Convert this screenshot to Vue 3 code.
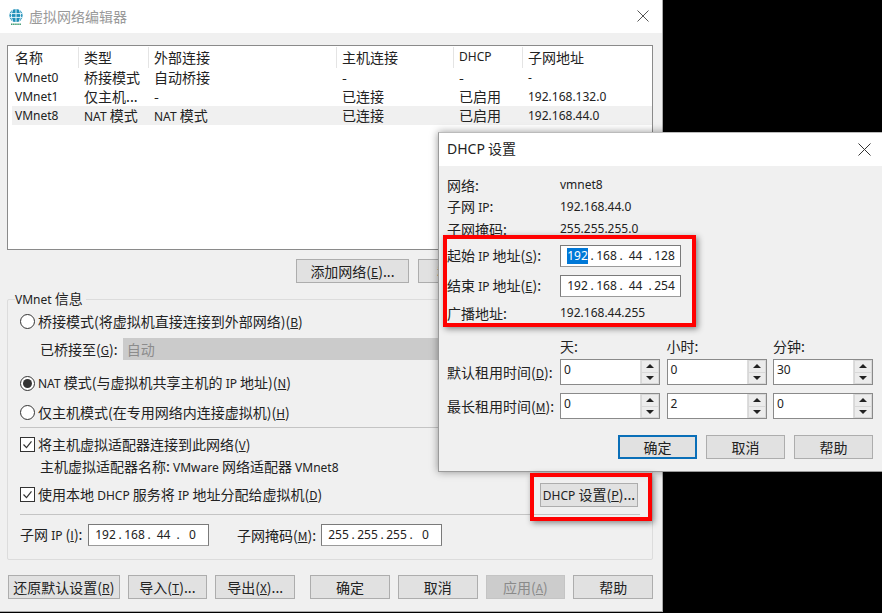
<script setup>
const rows = [
  { name: "VMnet0", type: "桥接模式", ext: "自动桥接", host: "-", dhcp: "-", subnet: "-" },
  { name: "VMnet1", type: "仅主机...", ext: "-", host: "已连接", dhcp: "已启用", subnet: "192.168.132.0" },
  { name: "VMnet8", type: "NAT 模式", ext: "NAT 模式", host: "已连接", dhcp: "已启用", subnet: "192.168.44.0", selected: true },
];

const leaseRows = [
  { label: "默认租用时间", key: "D", values: ["0", "0", "30"] },
  { label: "最长租用时间", key: "M", values: ["0", "2", "0"] },
];
</script>

<template>
  <div class="screen">
    <div class="win">
      <div class="titlebar">
        <svg class="app-icon" width="18" height="18" viewBox="0 0 18 18">
          <circle cx="9" cy="7.5" r="6.6" fill="#1f8fb8" />
          <path d="M2.6 5.6h12.8M2.6 9.4h12.8M9 1v13M5.6 2.2c-1.6 3-1.6 7.6 0 10.6M12.4 2.2c1.6 3 1.6 7.6 0 10.6" fill="none" stroke="#e4f5fb" stroke-width="1" />
          <path d="M4 16.2h10" stroke="#3d9a6e" stroke-width="1.6" stroke-dasharray="1.5 .6" />
        </svg>
        <span class="title-text">虚拟网络编辑器</span>
        <svg class="close main-close" width="12" height="12" viewBox="0 0 12 12">
          <path d="M.5.5l11 11M11.5.5l-11 11" stroke="#555" stroke-width="1" fill="none" />
        </svg>
      </div>

      <div class="content">
        <div class="list">
          <div class="tr th">
            <div class="first">名称</div>
            <div>类型</div>
            <div>外部连接</div>
            <div>主机连接</div>
            <div class="en">DHCP</div>
            <div>子网地址</div>
          </div>
          <div v-for="row in rows" :key="row.name" class="tr" :class="{ selected: row.selected }">
            <div class="first en">{{ row.name }}</div>
            <div v-if="row.type.startsWith('NAT')"><span class="en">NAT</span> 模式</div>
            <div v-else>{{ row.type }}</div>
            <div v-if="row.ext.startsWith('NAT')"><span class="en">NAT</span> 模式</div>
            <div v-else>{{ row.ext }}</div>
            <div>{{ row.host }}</div>
            <div>{{ row.dhcp }}</div>
            <div class="en">{{ row.subnet }}</div>
          </div>
        </div>

        <div class="list-actions">
          <button class="btn wide">添加网络(<u>E</u>)...</button>
          <button class="btn wide">移除网络(<u>O</u>)</button>
          <button class="btn wide">重命名网络(<u>W</u>)...</button>
        </div>

        <div class="group">
          <span class="legend"><span class="en">VMnet</span> 信息</span>

          <div class="opt r1"><i class="radio"></i><span>桥接模式(将虚拟机直接连接到外部网络)(<u>B</u>)</span></div>
          <div class="bridge">
            <span>已桥接至(<u>G</u>):</span>
            <div class="select-off">自动</div>
          </div>
          <div class="opt r2"><i class="radio on"></i><span><span class="en">NAT</span> 模式(与虚拟机共享主机的 <span class="en">IP</span> 地址)(<u>N</u>)</span></div>
          <div class="opt r3"><i class="radio"></i><span>仅主机模式(在专用网络内连接虚拟机)(<u>H</u>)</span></div>
          <div class="line l1"></div>
          <div class="opt c1">
            <i class="check"><svg width="13" height="13" viewBox="0 0 13 13"><path d="M2.5 6.5l3 3.2 5-6.4" fill="none" stroke="#333" stroke-width="1.2" /></svg></i>
            <span>将主机虚拟适配器连接到此网络(<u>V</u>)</span>
          </div>
          <div class="adapter">主机虚拟适配器名称: <span class="en">VMware</span> 网络适配器 <span class="en">VMnet8</span></div>
          <div class="opt c2">
            <i class="check"><svg width="13" height="13" viewBox="0 0 13 13"><path d="M2.5 6.5l3 3.2 5-6.4" fill="none" stroke="#333" stroke-width="1.2" /></svg></i>
            <span>使用本地 <span class="en">DHCP</span> 服务将 <span class="en">IP</span> 地址分配给虚拟机(<u>D</u>)</span>
            <button class="btn dhcp-btn"><span class="en">DHCP</span> 设置(<u>P</u>)...</button>
          </div>
          <div class="line l2"></div>
          <div class="subnet">
            <span class="subnet-label">子网 <span class="en">IP</span> (<u>I</u>):</span>
            <div class="ip">
              <span class="seg">192</span><span class="dot">.</span><span class="seg">168</span><span class="dot">.</span><span class="seg">44</span><span class="dot">.</span><span class="seg">0</span>
            </div>
            <span class="mask-label">子网掩码(<u>M</u>):</span>
            <div class="ip">
              <span class="seg">255</span><span class="dot">.</span><span class="seg">255</span><span class="dot">.</span><span class="seg">255</span><span class="dot">.</span><span class="seg">0</span>
            </div>
          </div>
        </div>

        <div class="footer">
          <button class="btn reset">还原默认设置(<u>R</u>)</button>
          <button class="btn">导入(<u>T</u>)...</button>
          <button class="btn">导出(<u>X</u>)...</button>
          <button class="btn ok">确定</button>
          <button class="btn">取消</button>
          <button class="btn disabled">应用(<u>A</u>)</button>
          <button class="btn">帮助</button>
        </div>
      </div>
    </div>

    <div class="dialog">
      <div class="dlg-title">
        <span class="dlg-name"><span class="dlg-en">DHCP</span> 设置</span>
        <svg class="close dlg-close" width="13" height="13" viewBox="0 0 13 13">
          <path d="M.5.5l12 12M12.5.5l-12 12" stroke="#333" stroke-width="1" fill="none" />
        </svg>
      </div>
      <div class="dlg-body">
        <div class="info first-info"><span class="lbl">网络:</span><span class="en">vmnet8</span></div>
        <div class="info"><span class="lbl">子网 <span class="en">IP</span>:</span><span class="en">192.168.44.0</span></div>
        <div class="info"><span class="lbl">子网掩码:</span><span class="en">255.255.255.0</span></div>
        <div class="info field start">
          <span class="lbl">起始 <span class="en">IP</span> 地址(<u>S</u>):</span>
          <div class="ip">
            <span class="seg sel">192</span><span class="dot">.</span><span class="seg">168</span><span class="dot">.</span><span class="seg">44</span><span class="dot">.</span><span class="seg">128</span>
          </div>
        </div>
        <div class="info field end">
          <span class="lbl">结束 <span class="en">IP</span> 地址(<u>E</u>):</span>
          <div class="ip">
            <span class="seg">192</span><span class="dot">.</span><span class="seg">168</span><span class="dot">.</span><span class="seg">44</span><span class="dot">.</span><span class="seg">254</span>
          </div>
        </div>
        <div class="info broadcast"><span class="lbl">广播地址:</span><span class="en">192.168.44.255</span></div>

        <div class="lease-head">
          <span>天:</span>
          <span>小时:</span>
          <span>分钟:</span>
        </div>
        <div v-for="lease in leaseRows" :key="lease.key" class="lease-row">
          <span class="lease-label">{{ lease.label }}(<u>{{ lease.key }}</u>):</span>
          <div v-for="(val, i) in lease.values" :key="i" class="spin">
            <span class="spin-val">{{ val }}</span>
            <div class="spin-btns">
              <b class="up"></b>
              <b class="down"></b>
            </div>
          </div>
        </div>
        <div class="dlg-footer">
          <button class="btn default">确定</button>
          <button class="btn">取消</button>
          <button class="btn">帮助</button>
        </div>
      </div>
    </div>

    <div class="redbox box-a"></div>
    <div class="redbox box-b"></div>
  </div>
</template>

<style>
html,
body {
  margin: 0;
  background: #000;
}
</style>

<style scoped>
.screen {
  position: relative;
  width: 882px;
  height: 613px;
  overflow: hidden;
  background: #000;
  font-family: "Noto Sans CJK SC", "Noto Sans", sans-serif;
  font-size: 14px;
  line-height: 18px;
  color: #222;
}

.en {
  font-family: "Noto Sans", "Noto Sans CJK SC", sans-serif;
  font-size: 12px;
}

u {
  font-size: 12px;
}

.win {
  width: 663px;
  height: 612px;
  box-sizing: border-box;
  background: #f0f0f0;
  border-right: 1px solid #aaa;
  border-bottom: 1px solid #aaa;
  display: flex;
  flex-direction: column;
}

.titlebar {
  height: 33px;
  background: #fff;
  display: flex;
  align-items: center;
  padding-left: 7px;
  flex-shrink: 0;
  position: relative;
}

.title-text {
  margin-left: 4px;
  margin-bottom: 2px;
  color: #999;
}

.main-close {
  position: absolute;
  left: 637px;
  top: 10px;
}

.content {
  padding: 12px 9px 0 7px;
}

.list {
  height: 205px;
  box-sizing: border-box;
  background: #fff;
  border: 1px solid #8a8a8a;
  padding-top: 1px;
}

.tr {
  display: grid;
  grid-template-columns: 70px 70px 188px 117px 69px 1fr;
  height: 19px;
  line-height: 19px;
  padding-left: 0;
}

.tr > div {
  padding-left: 6px;
  white-space: nowrap;
}

.tr > .first {
  padding-left: 7px;
}

.th {
  height: 21px;
  line-height: 20px;
}

.th > div + div {
  border-left: 1px solid #e4e4e4;
  padding-left: 5px;
}

.selected {
  background: #f0f0f0;
  margin-left: 4px;
  padding-left: 0;
  grid-template-columns: 66px 70px 188px 117px 69px 1fr;
}

.selected > .first {
  padding-left: 3px;
}

.list-actions {
  display: flex;
  gap: 9px;
  margin-top: 9px;
  padding-left: 289px;
}

.btn {
  width: 80px;
  height: 24px;
  padding: 0;
  box-sizing: border-box;
  background: #e1e1e1;
  border: 1px solid #adadad;
  font: inherit;
  color: #222;
  white-space: nowrap;
}

.btn.wide {
  width: 113px;
}

.group {
  position: relative;
  height: 261px;
  box-sizing: border-box;
  margin-top: 16px;
  padding-left: 12px;
  padding-right: 12px;
  border: 1px solid #dcdcdc;
  border-radius: 2px;
}

.legend {
  position: absolute;
  left: 7px;
  top: -11px;
  padding-right: 3px;
  background: #f0f0f0;
}

.opt {
  display: flex;
  align-items: center;
  height: 22px;
  white-space: nowrap;
}

.r1 {
  margin-top: 10px;
}

.r2 {
  margin-top: 12px;
}

.r3 {
  margin-top: 7px;
}

.c1 {
  margin-top: 5px;
}

.c2 {
  margin-top: 6px;
  height: 23px;
}

.radio {
  width: 15px;
  height: 15px;
  box-sizing: border-box;
  border: 1px solid #333;
  border-radius: 50%;
  background: #fff;
  margin-right: 3px;
  flex-shrink: 0;
  display: block;
  position: relative;
}

.radio.on::after {
  content: "";
  position: absolute;
  inset: 2px;
  border-radius: 50%;
  background: #333;
}

.check {
  width: 15px;
  height: 15px;
  box-sizing: border-box;
  border: 1px solid #333;
  background: #fff;
  margin-right: 3px;
  flex-shrink: 0;
  display: block;
}

.check svg {
  display: block;
  margin: 0;
}

.bridge {
  display: flex;
  align-items: center;
  height: 22px;
  margin-top: 6px;
  padding-left: 20px;
}

.select-off {
  margin-left: 5px;
  flex: 1;
  height: 22px;
  line-height: 22px;
  padding-left: 4px;
  background: #cbcbcb;
  color: #8c8c8c;
}

.line {
  height: 1px;
  background: #c4c4c4;
}

.l1 {
  margin-top: 4px;
}

.l2 {
  margin-top: 8px;
}

.adapter {
  height: 22px;
  line-height: 22px;
  padding-left: 20px;
  white-space: nowrap;
}

.dhcp-btn {
  width: 98px;
  height: 24px;
  margin-left: auto;
  margin-right: 2px;
}

.subnet {
  display: flex;
  align-items: center;
  margin-top: 9px;
  height: 22px;
  white-space: nowrap;
}

.subnet-label {
  width: 68px;
}

.mask-label {
  margin-left: 28px;
  width: 84px;
}

.ip {
  width: 121px;
  height: 22px;
  box-sizing: border-box;
  border: 1px solid #7a7a7a;
  border-bottom-color: #9a9a9a;
  background: #fff;
  display: flex;
  align-items: center;
  padding-left: 6px;
  font-family: "Noto Sans", sans-serif;
  font-size: 12px;
  flex-shrink: 0;
}

.seg {
  width: 21px;
  text-align: center;
}

.seg.sel {
  background: #0078d7;
  color: #fff;
  line-height: 16px;
}

.dot {
  width: 8px;
  text-align: center;
}

.footer {
  display: flex;
  margin-top: 15px;
  padding-left: 1px;
  gap: 8px;
}

.reset {
  width: 112px;
}

.ok {
  margin-left: 7px;
}

.disabled {
  background: #cccccc;
  border-color: #c4c4c4;
  color: #8a8a8a;
}

.dialog {
  position: absolute;
  left: 438px;
  top: 132px;
  width: 444px;
  height: 340px;
  box-sizing: border-box;
  background: #f0f0f0;
  border-left: 1px solid #9a9a9a;
  border-top: 1px solid #bbb;
  border-bottom: 1px solid #9a9a9a;
  box-shadow: 0 0 8px rgba(0, 0, 0, 0.4);
  display: flex;
  flex-direction: column;
}

.dlg-title {
  height: 33px;
  background: #fff;
  display: flex;
  align-items: center;
  padding-left: 8px;
  flex-shrink: 0;
  position: relative;
  color: #222;
}

.dlg-name {
  margin-bottom: 2px;
}

.dlg-en {
  font-family: "Noto Sans", sans-serif;
  font-size: 14px;
}

.dlg-close {
  position: absolute;
  left: 419px;
  top: 10px;
}

.dlg-body {
  padding-left: 8px;
  display: flex;
  flex-direction: column;
}

.info {
  display: flex;
  align-items: center;
  height: 22px;
  white-space: nowrap;
}

.first-info {
  margin-top: 8px;
}

.lbl {
  width: 113px;
  flex-shrink: 0;
}

.field.start {
  margin-top: 5px;
}

.field.end {
  margin-top: 8px;
}

.broadcast {
  margin-top: 5px;
}

.lease-head {
  display: flex;
  margin-top: 11px;
  margin-bottom: 2px;
  height: 22px;
  align-items: center;
  padding-left: 113px;
}

.lease-head span {
  width: 106.5px;
}

.lease-row {
  display: flex;
  align-items: center;
  height: 26px;
  margin-bottom: 8px;
  white-space: nowrap;
}

.lease-label {
  width: 113px;
  flex-shrink: 0;
}

.spin {
  width: 100px;
  height: 26px;
  box-sizing: border-box;
  border: 1px solid #8a8a8a;
  background: #fff;
  margin-right: 6.5px;
  position: relative;
  font-family: "Noto Sans", sans-serif;
  font-size: 12px;
  line-height: 20px;
  padding-left: 3px;
}

.spin-btns {
  position: absolute;
  right: 0;
  top: 0;
  bottom: 0;
  width: 19px;
  border-left: 1px solid #ddd;
  background: #d8d8d8;
  display: flex;
  flex-direction: column;
  gap: 1px;
  padding: 1px;
  box-sizing: border-box;
}

.spin-btns b {
  flex: 1;
  background: #ececec;
  position: relative;
}

.spin-btns b::after {
  content: "";
  position: absolute;
  left: 50%;
  top: 50%;
  margin-left: -4px;
  margin-top: -2px;
  border-left: 4px solid transparent;
  border-right: 4px solid transparent;
}

.up::after {
  border-bottom: 4px solid #222;
}

.down::after {
  border-top: 4px solid #222;
}

.dlg-footer {
  display: flex;
  gap: 9px;
  padding-left: 171px;
  margin-top: 8px;
}

.dlg-footer .btn {
  width: 79px;
}

.default {
  border: 2px solid #0a6fb8;
}

.redbox {
  position: absolute;
  box-sizing: border-box;
  border: 4px solid #f00;
  box-shadow: 2px 2px 6px rgba(0, 0, 0, 0.45);
}

.box-a {
  left: 443px;
  top: 235px;
  width: 253px;
  height: 92px;
}

.box-b {
  left: 530px;
  top: 473px;
  width: 122px;
  height: 48px;
}
</style>
